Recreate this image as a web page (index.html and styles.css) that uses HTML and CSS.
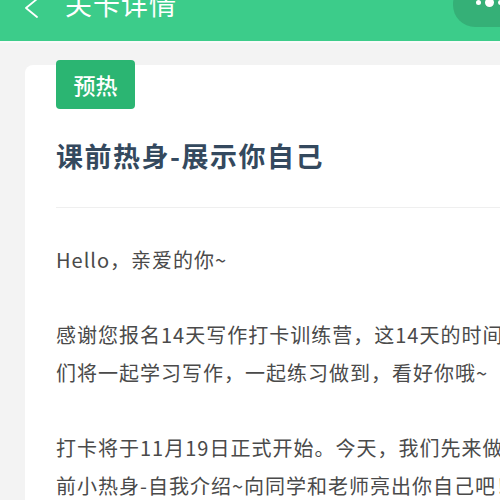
FILE: index.html
```html
<!DOCTYPE html>
<html lang="zh-CN">
<head>
    <meta charset="UTF-8">
    <meta name="viewport" content="width=device-width, initial-scale=1.0">
    <title>关卡详情</title>
    <link rel="stylesheet" href="styles.css">
</head>
<body>
    <header class="topbar">
        <svg class="back" width="16" height="24" viewBox="0 0 16 24">
            <polyline points="13,1 2,10 13,19" fill="none" stroke="#fff" stroke-width="1.8" stroke-linecap="round" stroke-linejoin="round"/>
        </svg>
        <h1 class="topbar-title">关卡详情</h1>
        <div class="capsule">
            <span class="dot"></span>
            <span class="dot dot-big"></span>
            <span class="dot"></span>
        </div>
    </header>
    <main class="card">
        <span class="tag">预热</span>
        <h2 class="card-title">课前热身-展示你自己</h2>
        <div class="content">
            <p>Hello，亲爱的你~</p>
            <p>感谢您报名14天写作打卡训练营，这14天的时间里，我<br>们将一起学习写作，一起练习做到，看好你哦~</p>
            <p>打卡将于11月19日正式开始。今天，我们先来做个课<br>前小热身-自我介绍~向同学和老师亮出你自己吧！</p>
        </div>
    </main>
</body>
</html>
```

FILE: styles.css
```css
html, body {
    overflow: hidden;
}
body {
    margin: 0;
    width: 500px;
    height: 500px;
    background: #f3f3f3;
    font-family: "Noto Sans CJK SC", "Noto Sans", sans-serif;
    color: #4a4a4a;
}
.topbar {
    display: flex;
    align-items: flex-start;
    height: 41px;
    background: #3ccc8a;
    border-bottom: 2px solid #f9f9f9;
    overflow: hidden;
}
.back {
    flex: none;
    margin: -2px 0 0 24px;
}
.topbar-title {
    margin: -13px 0 0 25px;
    font-size: 27px;
    line-height: 34px;
    font-weight: 400;
    color: #fff;
    letter-spacing: 1px;
}
.capsule {
    display: flex;
    align-items: flex-start;
    gap: 4px;
    margin: -18px -20px 0 auto;
    width: 67px;
    height: 45px;
    padding: 16px 0 0 23px;
    box-sizing: border-box;
    background: #35b077;
    border-radius: 22px;
}
.dot {
    flex: none;
    width: 5px;
    height: 5px;
    margin-top: 2px;
    border-radius: 50%;
    background: #fff;
}
.dot-big {
    width: 9px;
    height: 9px;
    margin-top: 0;
}
.card {
    display: flex;
    flex-direction: column;
    align-items: flex-start;
    width: 560px;
    margin: 22px 0 0 25px;
    padding: 0 0 0 31px;
    background: #fff;
    border-radius: 8px;
}
.tag {
    margin-top: -5px;
    width: 79px;
    height: 49px;
    line-height: 48px;
    text-align: center;
    font-size: 22px;
    font-weight: 500;
    color: #fff;
    background: #2bb572;
    border-radius: 4px;
}
.card-title {
    align-self: stretch;
    margin: 29px 0 0;
    padding-bottom: 33px;
    border-bottom: 1px solid #efefef;
    font-size: 27px;
    line-height: 36px;
    font-weight: 700;
    letter-spacing: 1.5px;
    color: #34495e;
}
.content {
    padding-top: 33px;
    font-size: 20px;
    line-height: 38px;
    letter-spacing: 1px;
    white-space: nowrap;
}
.content p {
    margin: 0 0 37px;
}
```
